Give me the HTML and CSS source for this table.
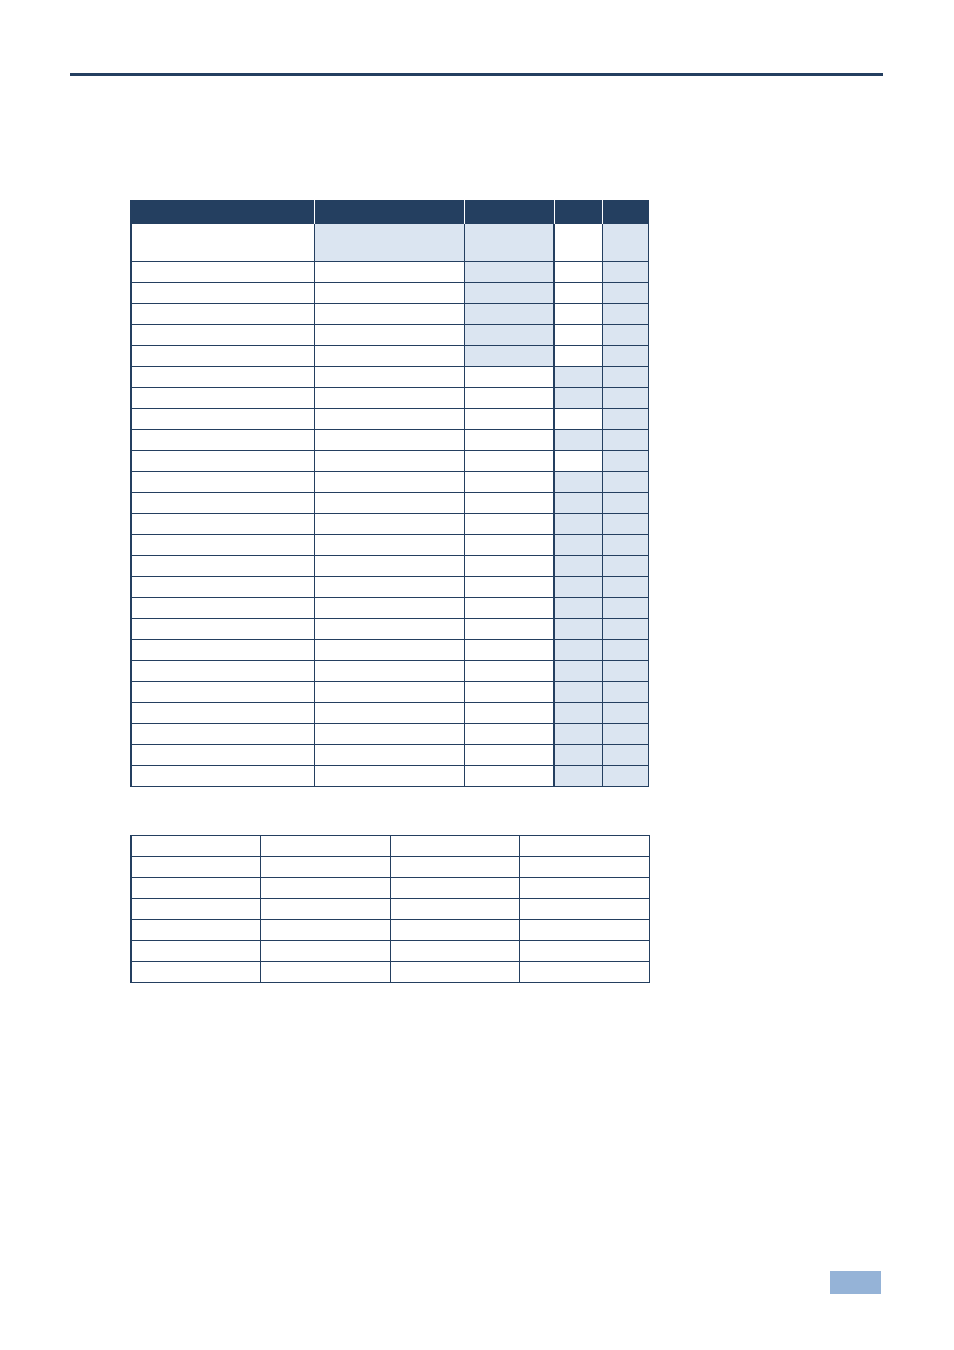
FILE: index.html
```html
<!DOCTYPE html>
<html>
<head>
<meta charset="utf-8">
<link rel="stylesheet" href="styles.css">
</head>
<body>
<div class="page">
  <div class="rule"></div>
  <div class="grid main" id="main"></div>
  <div class="grid second" id="second"></div>
  <div class="pagebox"></div>
</div>
<script src="script.js"></script>
</body>
</html>
```
FILE: styles.css
```css
html, body { margin: 0; padding: 0; background: #fff; font-family: "Liberation Sans", Arial, sans-serif; }
.page { width: 954px; height: 1350px; overflow: hidden; }
.rule { margin: 73px 0 0 70px; width: 813px; height: 3px; background: #243f60; }
.grid { display: grid; border-left: 2px solid #243f60; box-sizing: content-box; }
.main { margin: 124px 0 0 130px; width: 517px; grid-template-columns: 183px 150px 90px 48px 46px; }
.second { margin: 48px 0 0 130px; width: 518px; grid-template-columns: 129px 130px 129px 130px; border-top: 1px solid #243f60; }
.c { box-sizing: border-box; height: 21px; border-right: 1px solid #243f60; border-bottom: 1px solid #243f60; background: #fff; }
.c.s { background: #dbe5f1; }
.c.thick { border-right-width: 2px; }
.c.tall { height: 38px; }
.h { box-sizing: border-box; height: 24px; background: #243f60; border-right: 1px solid #fff; }
.h.last { border-right: none; }
.pagebox { margin: 288px 0 0 830px; width: 51px; height: 23px; background: #95b3d7; }
```
FILE: script.js
```js
(function () {
  var main = document.getElementById('main');
  for (var i = 0; i < 5; i++) {
    var h = document.createElement('div');
    h.className = 'h' + (i === 4 ? ' last' : '');
    main.appendChild(h);
  }
  // shading pattern per row: [c1,c2,c3,c4,c5]
  var rows = [];
  rows.push([0,1,1,0,1]);
  for (var r = 0; r < 5; r++) rows.push([0,0,1,0,1]);
  rows.push([0,0,0,1,1]);
  rows.push([0,0,0,1,1]);
  rows.push([0,0,0,0,1]);
  rows.push([0,0,0,1,1]);
  rows.push([0,0,0,0,1]);
  for (var r2 = 0; r2 < 15; r2++) rows.push([0,0,0,1,1]);
  rows.forEach(function (row, ri) {
    row.forEach(function (s, ci) {
      var d = document.createElement('div');
      d.className = 'c' + (s ? ' s' : '') + (ci === 2 ? ' thick' : '') + (ri === 0 ? ' tall' : '');
      main.appendChild(d);
    });
  });
  var second = document.getElementById('second');
  for (var k = 0; k < 28; k++) {
    var e = document.createElement('div');
    e.className = 'c';
    second.appendChild(e);
  }
})();
```
